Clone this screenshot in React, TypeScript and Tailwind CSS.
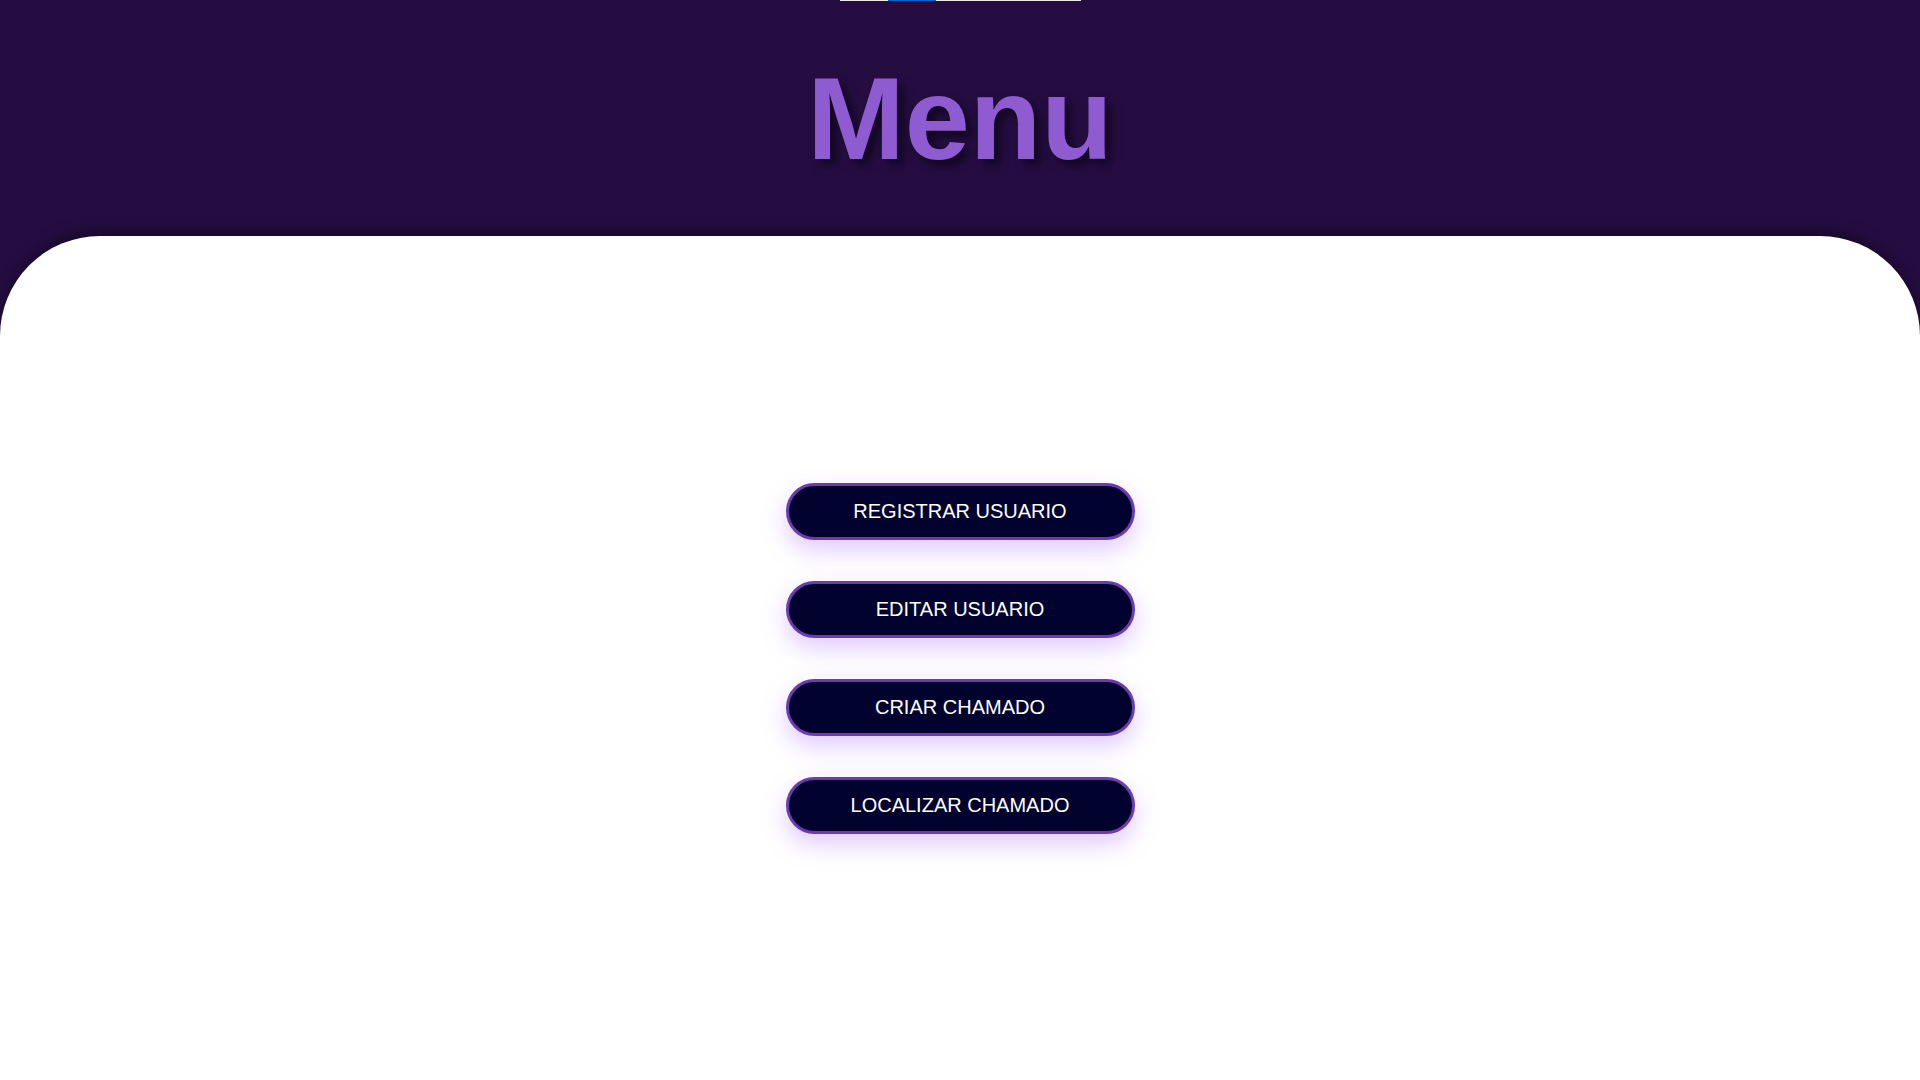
import React from "react";

const OPTIONS = ["REGISTRAR USUARIO", "EDITAR USUARIO", "CRIAR CHAMADO", "LOCALIZAR CHAMADO"];

export default function App() {
  return (
    <div className="relative flex min-h-screen flex-col bg-[#250d42] font-['Liberation_Sans',Arial,sans-serif]">
      {/* thin progress strip at the very top */}
      <div className="absolute left-[840px] top-0 flex h-px w-[241px] bg-[#ececec]">
        <div className="ml-[48px] h-px w-[48px] bg-[#0066cc]" />
      </div>

      {/* Header */}
      <header className="flex h-[236px] items-center justify-center">
        <h1 className="text-[117px] font-bold leading-none text-[#8e5bd1] [text-shadow:6px_6px_10px_rgba(0,0,0,0.55)]">
          Menu
        </h1>
      </header>

      {/* Panel */}
      <main className="flex flex-1 flex-col items-center justify-center gap-[41px] rounded-t-[100px] bg-white shadow-[0_-6px_14px_rgba(0,0,0,0.35)]">
        {OPTIONS.map((label) => (
          <button
            key={label}
            className="h-[57px] w-[349px] rounded-full border-[3px] border-[#6a3cae] bg-[#02022e] text-[20px] text-white shadow-[0_10px_24px_rgba(165,100,255,0.35)]"
          >
            {label}
          </button>
        ))}
      </main>
    </div>
  );
}
